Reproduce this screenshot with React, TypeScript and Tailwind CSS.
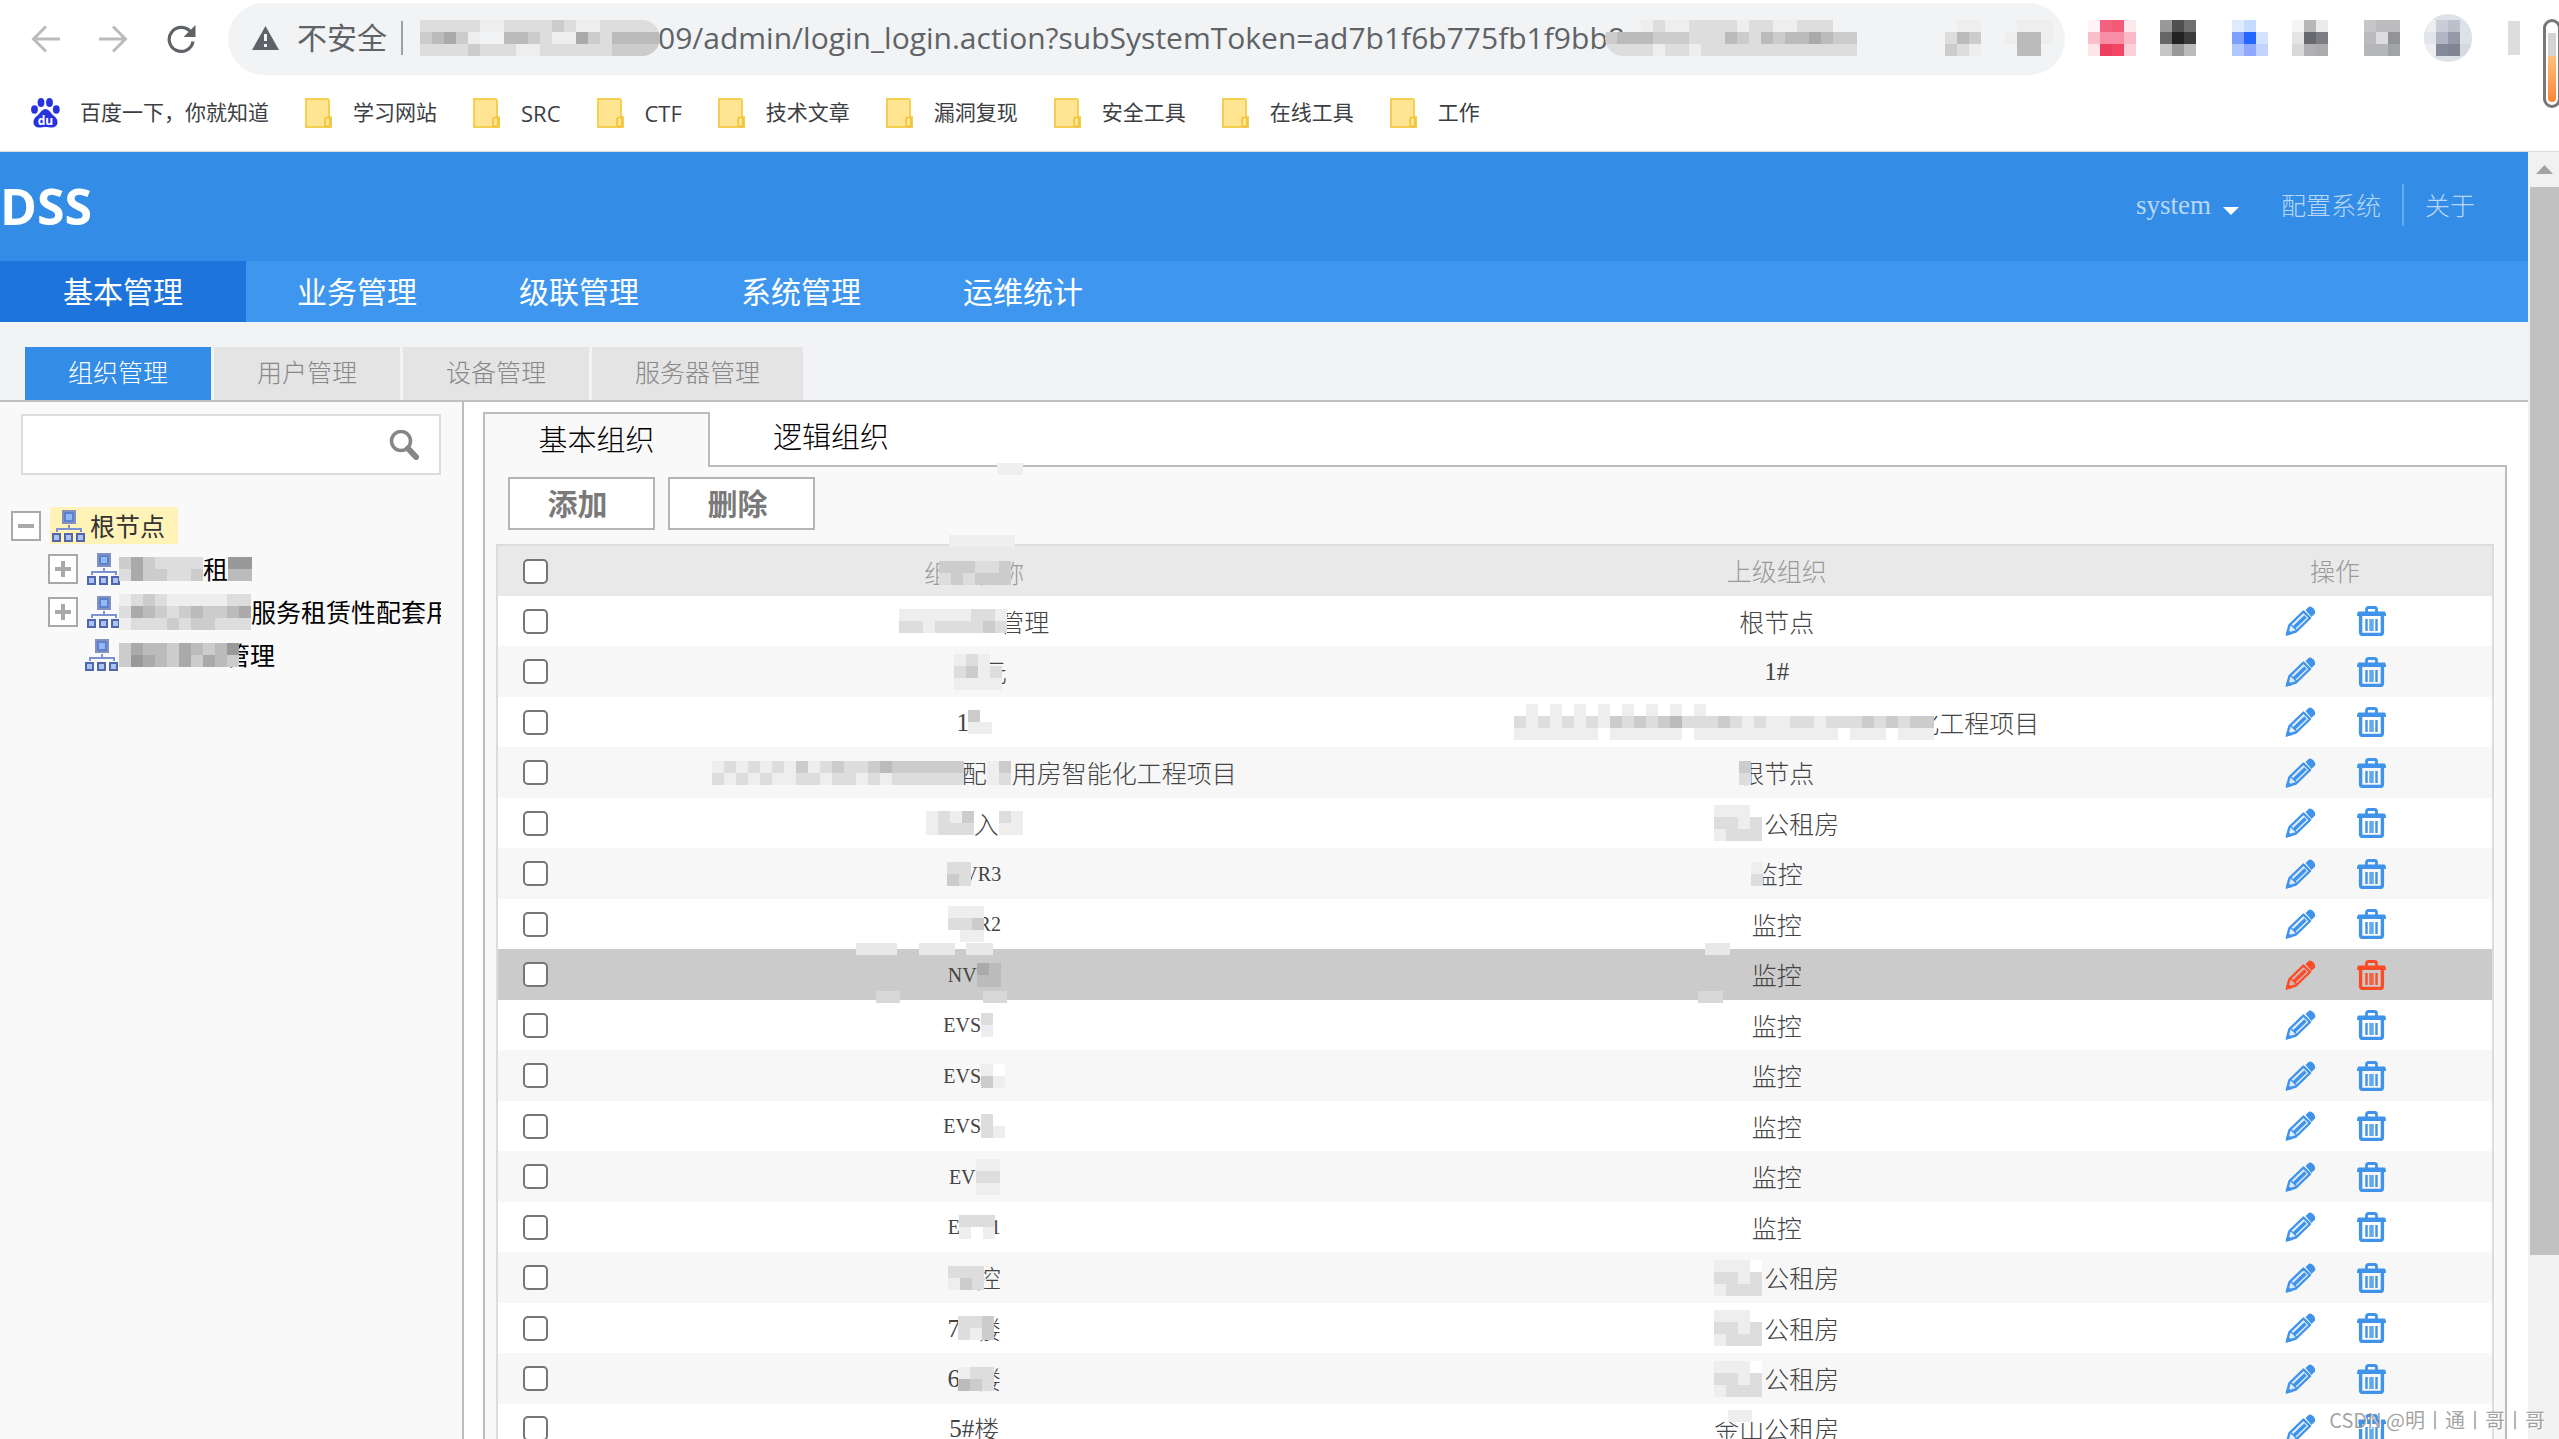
import { useState } from "react";
import type { ReactNode } from "react";

// one hex digit per 12px cell, "." leaves the cell open
function Mosaic({ rows, className = "" }: { rows: string[]; className?: string }) {
  const w = rows[0].length * 12;
  const h = rows.length * 12;
  return (
    <svg width={w} height={h} viewBox={`0 0 ${w} ${h}`} shapeRendering="crispEdges" className={`relative shrink-0 ${className}`} aria-hidden="true">
      {rows.map((row, y) =>
        row.split("").map((c, x) =>
          c === "." ? null : <rect key={`${x}-${y}`} x={x * 12} y={y * 12} width={12} height={12} fill={`#${c}${c}${c}`} />
        )
      )}
    </svg>
  );
}

// same thing with full colours, used for the toolbar extensions
function Pixels({ rows, className = "" }: { rows: string[][]; className?: string }) {
  const w = rows[0].length * 12;
  return (
    <svg width={w} height={36} viewBox={`0 0 ${w} 36`} shapeRendering="crispEdges" className={`shrink-0 ${className}`} aria-hidden="true">
      {rows.map((row, y) => row.map((c, x) => <rect key={`${x}-${y}`} x={x * 12} y={y * 12} width={12} height={12} fill={c} />))}
    </svg>
  );
}

function Latin({ children }: { children: ReactNode }) {
  return <span className="font-['Liberation_Serif',serif] text-[20px]">{children}</span>;
}

function Num({ children }: { children: ReactNode }) {
  return <span className="font-['Liberation_Serif',serif]">{children}</span>;
}

const bookmarks = ["学习网站", "SRC", "CTF", "技术文章", "漏洞复现", "安全工具", "在线工具", "工作"];
const mainMenu = ["基本管理", "业务管理", "级联管理", "系统管理", "运维统计"];
const subMenu = ["组织管理", "用户管理", "设备管理", "服务器管理"];

const house = (
  <>
    <Mosaic rows={["eeef.", "dded.", "eddd."]} className="-mr-[10px]" />
    公租房
  </>
);

const rows: { name: ReactNode; parent: ReactNode }[] = [
  { name: <><Mosaic rows={["eeeeeedde", "ddeddddcd"]} className="-mr-[8px]" />管理</>, parent: "根节点" },
  { name: <><Mosaic rows={[".ede.", ".dced", ".eeee"]} className="-mr-[20px]" />元</>, parent: <Num>1#</Num> },
  {
    name: <><Num>1</Num><Mosaic rows={["cf", "ee"]} className="-ml-[1px]" /></>,
    parent: <><Mosaic rows={["fefefefefefefefefffffffffffffffffff", "dedededecdcdcbdddcdedeeddedddcdcdcc", "eeeeeeefeeeeeefeeeeeeeeeeeefeeefeee"]} className="-mr-[20px]" />化工程项目</>,
  },
  {
    name: <><Mosaic rows={["edededecedcddcbcccccc", "dededeeddeddededddddd"]} className="-mr-[2px]" />配<Mosaic rows={["ec", "ed"]} className="mr-[1px]" />用房智能化工程项目</>,
    parent: <><Mosaic rows={["c", "d"]} className="-mr-[12px]" />根节点</>,
  },
  { name: <><Mosaic rows={["edec", "eddd"]} />入<Mosaic rows={["de", "ee"]} /></>, parent: house },
  { name: <><Mosaic rows={["dd", "cd"]} className="-mr-[8px]" /><Latin>VR3</Latin></>, parent: <><Mosaic rows={["e", "d"]} className="-mr-[10px]" />监控</> },
  { name: <><Mosaic rows={["eee", "ddc", "fee"]} className="-mr-[6px]" /><Latin>R2</Latin></>, parent: "监控" },
  { name: <><Latin>NV</Latin><Mosaic rows={["ab", "bb"]} /></>, parent: "监控" },
  { name: <><Latin>EVS</Latin><Mosaic rows={["df", "ef"]} /></>, parent: "监控" },
  { name: <><Latin>EVS</Latin><Mosaic rows={["ef", "ce"]} /></>, parent: "监控" },
  { name: <><Latin>EVS</Latin><Mosaic rows={["df", "de"]} /></>, parent: "监控" },
  { name: <><Latin>EV</Latin><Mosaic rows={["ee", "dd", "ee"]} /></>, parent: "监控" },
  { name: <><Latin>E</Latin><Mosaic rows={["ddd", "efe"]} className="-ml-[1px] -mr-[4px]" /><Latin>1</Latin></>, parent: "监控" },
  { name: <><Mosaic rows={["ddd", "ecd"]} className="-mr-[8px]" />控</>, parent: house },
  { name: <><Num>7</Num><Mosaic rows={["ddc", "dec"]} className="-ml-[2px] -mr-[18px]" />楼</>, parent: house },
  { name: <><Num>6</Num><Mosaic rows={["edd", "bcd"]} className="-ml-[2px] -mr-[18px]" />楼</>, parent: house },
  { name: <><Num>5#</Num>楼</>, parent: <>金山<Mosaic rows={["feef"]} className="-ml-[48px] self-start" />公租房</> },
];

function BackIcon({ flip = false }: { flip?: boolean }) {
  return (
    <svg width="30" height="28" viewBox="0 0 30 28" fill="none" stroke="#b9bbbd" strokeWidth="3" className={flip ? "rotate-180" : ""}>
      <path d="M29 14H3M15 1.5L2.500 14L15 26.500" />
    </svg>
  );
}

function ReloadIcon() {
  return (
    <svg width="30" height="30" viewBox="0 0 30 30" fill="none">
      <path d="M25 8.500A12 12 0 1 0 27 17.500" stroke="#5f6368" strokeWidth="3.200" />
      <path d="M29.500 1V13H17.500Z" fill="#5f6368" />
    </svg>
  );
}

function FolderIcon() {
  return (
    <svg width="27" height="30" viewBox="0 0 27 30">
      <path d="M1 1H22Q24 1 24 3V19H26V29H1Z" fill="#ffe591" stroke="#f5cf53" strokeWidth="2" />
      <rect x="20" y="19.500" width="5" height="9" rx="2" fill="#ffe591" stroke="#f0c02f" strokeWidth="1.500" />
    </svg>
  );
}

function BaiduIcon() {
  return (
    <svg width="29" height="30" viewBox="0 0 29 30" fill="#2932e1">
      <ellipse cx="10" cy="4.500" rx="3.400" ry="4.500" />
      <ellipse cx="18.500" cy="4.500" rx="3.400" ry="4.500" />
      <ellipse cx="3.500" cy="11.500" rx="3.400" ry="4.200" />
      <ellipse cx="25.300" cy="11.500" rx="3.400" ry="4.200" />
      <path d="M14.500 11C18 11 19.500 15 22.500 17.500C29 22 27 29.500 21 29.500C18 29.500 17 29 14.500 29C12 29 11 29.500 8 29.500C2 29.500 0 22 6.500 17.500C9.500 15 11 11 14.500 11Z" />
      <text x="14.500" y="26.500" fontSize="12" fontWeight="700" fontFamily="Open Sans, sans-serif" textAnchor="middle" fill="#fff">du</text>
    </svg>
  );
}

function OrgIcon() {
  return (
    <svg width="34" height="32" viewBox="0 0 34 32" className="shrink-0">
      <rect x="11" y="1" width="12" height="12" fill="#5f7fd0" stroke="#8391bd" strokeWidth="2" />
      <rect x="14" y="4" width="6" height="6" fill="#8fb8f5" />
      <path d="M17 15V19M5 22V19H29V22" fill="none" stroke="#7d93cf" strokeWidth="2" />
      <rect x="1" y="24" width="7" height="7" fill="#a9c3f2" stroke="#5166ad" strokeWidth="2" />
      <rect x="13" y="24" width="7" height="7" fill="#a9c3f2" stroke="#5166ad" strokeWidth="2" />
      <rect x="25" y="24" width="7" height="7" fill="#a9c3f2" stroke="#5166ad" strokeWidth="2" />
    </svg>
  );
}

function PencilIcon() {
  return (
    <svg width="31" height="30" viewBox="0 0 31 30" fill="none" stroke="currentColor">
      <path d="M2 28L4.500 19L18.500 5.500L25 12L11 25.500Z" strokeWidth="2.400" strokeLinejoin="round" fill="currentColor" fillOpacity="0.150" />
      <path d="M9 21.500L20.500 10.500" strokeWidth="3.400" />
      <path d="M5.500 18.500L12 24.500" strokeWidth="1.400" />
      <path d="M20.500 4L24 0.800Q26 0 28.800 2.800Q31 5.500 30 7.500L26.500 11Z" fill="currentColor" stroke="none" />
      <path d="M0.500 30L2.500 23L7.500 28Z" fill="currentColor" stroke="none" />
    </svg>
  );
}

function TrashIcon() {
  return (
    <svg width="29" height="30" viewBox="0 0 29 30" fill="none" stroke="currentColor">
      <path d="M9.500 6V3.500Q9.500 1.500 11.500 1.500H17.500Q19.500 1.500 19.500 3.500V6" strokeWidth="2.800" />
      <path d="M1.500 5.500H27.500Q29 6 29 10H0Q0 6 1.500 5.500Z" fill="currentColor" stroke="none" />
      <path d="M3.600 9V26Q3.600 28.400 5.500 28.400H23.500Q25.400 28.400 25.400 26V9" strokeWidth="3.400" />
      <path d="M9.500 13V25M19.500 13V25" strokeWidth="2.400" />
      <path d="M14.500 13V25" strokeWidth="4.500" opacity="0.800" />
    </svg>
  );
}

function Toggle({ open = false }: { open?: boolean }) {
  return (
    <button aria-label={open ? "收起" : "展开"} className="flex size-[30px] shrink-0 items-center justify-center border-2 border-[#a9a9a9] bg-white">
      <svg width="18" height="18" viewBox="0 0 18 18" stroke="#a9a9a9" strokeWidth="4">
        <path d={open ? "M1 9H17" : "M1 9H17M9 1V17"} />
      </svg>
    </button>
  );
}

function Toolbar() {
  return (
    <div className="border-b border-[#d9dce0] bg-white font-['Open_Sans','Noto_Sans_CJK_SC',sans-serif]">
      <div className="flex h-[78px] items-center pl-[31px]">
        <button aria-label="后退"><BackIcon /></button>
        <button aria-label="前进" className="ml-[37px]"><BackIcon flip /></button>
        <button aria-label="刷新" className="ml-[38px]"><ReloadIcon /></button>
        <div className="ml-[32px] flex h-[72px] min-w-0 flex-1 items-center rounded-full bg-[#f1f3f4] pb-[3px] pl-[24px] text-[#5f6368]">
          <svg width="27" height="24" viewBox="0 0 27 24">
            <path d="M13.500 0L27 24H0Z" fill="#5f6368" />
            <path d="M13.500 8V15M13.500 18V21" stroke="#f1f3f4" strokeWidth="3" />
          </svg>
          <span className="ml-[18px] text-[30px]">不安全</span>
          <span className="ml-[14px] h-[34px] w-[2px] bg-[#9aa0a6]" />
          <Mosaic rows={["dddddeeddddcdeeddddd", "cbace..bbcdeeacdbbbb", "ddddcdddeeddddddcccc"]} className="ml-[17px] rounded-r-full" />
          <label htmlFor="address" className="sr-only">地址</label>
          <input
            id="address"
            className="-ml-[2px] h-[44px] w-[990px] bg-transparent text-[30px] outline-none"
            defaultValue="09/admin/login_login.action?subSystemToken=ad7b1f6b775fb1f9bb8"
          />
          <Mosaic rows={["...edeeddddeddeeddd..", "cbbbcccdddbcdbcbbabcc", "ddddeddeddddddddddddd"]} className="-ml-[43px] rounded-l-full" />
          <div className="ml-auto flex gap-[24px] pr-[12px]">
            <Mosaic rows={[".ee", "dbc", "cde"]} />
            <Mosaic rows={[".eee", "ebbe", ".bb."]} />
          </div>
        </div>
        <div className="flex h-full items-center pb-[3px] pl-[23px]">
          <Pixels rows={[["#fff3f5", "#f4627f", "#f25a78", "#fde8ec"], ["#fbbecb", "#f78ea5", "#f78ea5", "#fbb8c6"], ["#fde5ea", "#ef3f61", "#f04565", "#fcd0d8"]]} />
          <Pixels className="ml-[24px]" rows={[["#999", "#505050", "#6f6f6f"], ["#666", "#222", "#3b3b3b"], ["#c6c6c6", "#999", "#bbb"]]} />
          <Pixels className="ml-[36px]" rows={[["#e0eaff", "#c5dcff", "#fff"], ["#7f9fff", "#2566ff", "#d3e2ff"], ["#b0c6ff", "#90a9ff", "#c3d2ff"]]} />
          <Pixels className="ml-[24px]" rows={[["#f4f6f5", "#b6b8ba", "#ebebeb"], ["#e4e4e4", "#67696e", "#7c7e84"], ["#d9d9dc", "#b0b0b3", "#abacae"]]} />
          <Pixels className="ml-[36px]" rows={[["#c6c6c8", "#bcbcbe", "#bcbcbe"], ["#bbbbbd", "#dddddf", "#929396"], ["#b5b6b8", "#b5b6b8", "#9fa4a6"]]} />
          <div className="ml-[24px] flex h-[48px] items-center overflow-hidden rounded-full bg-[#dde1e8]">
            <Pixels rows={[["#eceef2", "#cacdd8", "#bcc0cb", "#dde1e8"], ["#e2e5eb", "#b0b5c2", "#959aa8", "#dde1e8"], ["#eceef2", "#848a9a", "#7f8593", "#d5d9e2"]]} />
          </div>
          <span className="ml-[36px] h-[34px] w-[12px] bg-[#dcddde]" />
          <span className="ml-[23px] w-[16px]" />
        </div>
      </div>
      <nav className="flex h-[73px] items-center pb-[3px] pl-[31px] text-[21px] text-[#3c4043]">
        <a href="#baidu" className="flex items-center gap-[20px]"><BaiduIcon />百度一下，你就知道</a>
        {bookmarks.map((b) => (
          <a key={b} href="#bookmark" className={`ml-[36px] flex items-center gap-[21px] ${b.length === 3 ? "text-[22px]" : ""}`}>
            <FolderIcon />{b}
          </a>
        ))}
      </nav>
      {/* battery widget that hangs over the window edge */}
      <div className="absolute top-[19px] -right-[2px] h-[89px] w-[18px] rounded-full border-3 border-[#777] bg-white p-[2px]">
        <div className="mt-[9px] h-[23px] bg-[#d3d3d3]" />
        <div className="h-[46px] rounded-b-full bg-gradient-to-b from-[#fdc07c] to-[#fb8432]" />
      </div>
    </div>
  );
}

function Header() {
  return (
    <header className="bg-[#338ce6]">
      <div className="flex h-[109px] items-center">
        <h1 className="font-['Open_Sans',sans-serif] text-[50px] font-bold text-white">DSS</h1>
        <div className="mb-[3px] ml-auto flex h-[42px] items-center pr-[53px] text-[25px] font-light text-[#b9d8f8]">
          <button className="flex items-center gap-[12px]">
            <span className="font-['Liberation_Serif',serif] text-[27px] font-normal">system</span>
            <svg width="16" height="8" viewBox="0 0 16 8" className="mt-[12px]"><path d="M0 0H16L8 8Z" fill="#fff" /></svg>
          </button>
          <a href="#config" className="ml-[42px]">配置系统</a>
          <span className="mx-[21px] h-full w-[2px] bg-[#66a9ee]" />
          <a href="#about">关于</a>
        </div>
      </div>
      <nav className="flex h-[61px] bg-[#3e96ef] text-[30px] text-white">
        {mainMenu.map((m, i) => (
          <a key={m} href="#menu" className={i === 0 ? "flex w-[246px] items-center justify-center bg-[#1d74da] pb-[2px]" : "flex items-center px-[51px] pb-[2px]"}>
            {m}
          </a>
        ))}
      </nav>
    </header>
  );
}

function Sidebar() {
  return (
    <aside className="w-[464px] shrink-0 border-r-2 border-[#bcbcbc] bg-[#f9f9f9] pt-[12px]">
      <div className="mr-[21px] ml-[21px] flex h-[61px] items-center border-2 border-[#dcdcdc] bg-white pr-[20px]">
        <input aria-label="搜索" className="h-full min-w-0 flex-1 bg-transparent px-3 text-[25px] outline-none" />
        <button aria-label="查询">
          <svg width="30" height="30" viewBox="0 0 30 30" fill="none" stroke="#868686">
            <circle cx="12" cy="11" r="9.500" strokeWidth="3.500" />
            <path d="M19 18.500L27 27" strokeWidth="6" strokeLinecap="round" />
          </svg>
        </button>
      </div>
      <ul className="mr-[21px] overflow-hidden pt-[29px] text-[25px] leading-[43px] whitespace-nowrap text-black">
        <li className="flex h-[43px] items-center gap-[9px] pl-[11px]">
          <Toggle open />
          <span className="flex h-[37px] items-center gap-[4px] bg-[#fff3b8] pr-[13px] pl-[2px] text-[#333]"><OrgIcon />根节点</span>
        </li>
        <li className="flex h-[43px] items-center pl-[48px]">
          <Toggle />
          <span className="ml-[9px] flex items-center">
            <OrgIcon />
            <Mosaic rows={["cacdddd", "daccddc"]} className="-ml-[2px]" />租<Mosaic rows={["99", "bb"]} />
          </span>
        </li>
        <li className="flex h-[43px] items-center pl-[48px]">
          <Toggle />
          <span className="ml-[9px] flex items-center">
            <OrgIcon />
            <Mosaic rows={["edcdeeeeedd", "dabcdcbccba", "edddcdccddd"]} className="-ml-[2px]" />服务租赁性配套用
          </span>
        </li>
        <li className="flex h-[43px] items-center pl-[85px]">
          <OrgIcon />
          <Mosaic rows={["cabbcabcb9", "c9abcacabc"]} className="-mr-[14px]" />管理
        </li>
      </ul>
    </aside>
  );
}

function OrgTable() {
  return (
    <table className="w-full table-fixed border-2 border-[#dcdcdc] text-[25px] font-light">
      <thead>
        <tr className="h-[51px] bg-[#e9e9e9] text-[#999]">
          <th className="w-[76px]"><input type="checkbox" aria-label="全选" className="block mx-auto size-[25px] appearance-none rounded-[5px] border-2 border-[#767676] bg-white" /></th>
          <th className="font-light">
            <span className="relative inline-block align-middle">
              组织名称
              <Mosaic rows={["cccddc", "dcdccc"]} className="absolute! top-[7px] left-[15px]" />
            </span>
          </th>
          <th className="font-light">上级组织</th>
          <th className="w-[315px] font-light">操作</th>
        </tr>
      </thead>
      <tbody className="text-[#444]">
        {rows.map((row, i) => (
          <tr
            key={i}
            className={i === 7 ? "h-[51px] bg-[#cbcbcb] text-[#fb4b27]" : "bg-white text-[#3f93ea] odd:h-[50px] even:h-[51px] even:bg-[#f7f7f7]"}
          >
            <td><input type="checkbox" aria-label={`选择第${i + 1}行`} className="block mx-auto size-[25px] appearance-none rounded-[5px] border-2 border-[#767676] bg-white" /></td>
            <td className="pb-[3px] text-center text-[#444]"><span className="inline-flex h-[37px] items-center align-middle">{row.name}</span></td>
            <td className="pb-[3px] text-center text-[#444]"><span className="inline-flex h-[37px] items-center align-middle">{row.parent}</span></td>
            <td>
              <div className="flex items-center justify-center gap-[41px]">
                <button aria-label="编辑"><PencilIcon /></button>
                <button aria-label="删除"><TrashIcon /></button>
              </div>
            </td>
          </tr>
        ))}
      </tbody>
    </table>
  );
}

// leftovers of the eraser around the name column
function Smudges() {
  return (
    <>
      <span className="absolute top-[61px] left-[533px] h-[12px] w-[26px] bg-[#efefef]" />
      <span className="absolute top-[133px] left-[485px] h-[12px] w-[66px] bg-[#efefef]" />
      <span className="absolute top-[541px] left-[392px] h-[12px] w-[41px] bg-[#e8e8e8]" />
      <span className="absolute top-[541px] left-[455px] h-[12px] w-[36px] bg-[#e8e8e8]" />
      <span className="absolute top-[541px] left-[502px] h-[12px] w-[27px] bg-[#e8e8e8]" />
      <span className="absolute top-[589px] left-[412px] h-[12px] w-[24px] bg-[#d8d8d8]" />
      <span className="absolute top-[589px] left-[519px] h-[12px] w-[24px] bg-[#d8d8d8]" />
      <span className="absolute top-[541px] left-[1241px] h-[12px] w-[25px] bg-[#e8e8e8]" />
      <span className="absolute top-[589px] left-[1234px] h-[12px] w-[25px] bg-[#d8d8d8]" />
    </>
  );
}

export default function App() {
  const [tab, setTab] = useState(0);

  return (
    <div className="relative flex h-screen flex-col overflow-hidden bg-white font-['Noto_Sans_CJK_SC',sans-serif]">
      <Toolbar />
      <div className="flex min-h-0 flex-1">
        <div className="flex min-w-0 flex-1 flex-col">
          <Header />
          <div className="flex h-[80px] shrink-0 items-end gap-[3px] border-b-2 border-[#c0c0c0] bg-[#f1f3f5] pl-[25px]">
            {subMenu.map((s, i) => (
              <button
                key={s}
                onClick={() => setTab(i)}
                className={`h-[53px] px-[43px] pb-[3px] text-[25px] font-light ${tab === i ? "bg-[#338ce6] text-white" : "bg-[#e4e4e4] text-[#888]"}`}
              >
                {s}
              </button>
            ))}
          </div>
          <div className="flex min-h-0 flex-1">
            <Sidebar />
            <main className="relative min-w-0 flex-1 pt-[10px] pr-[21px] pl-[19px]">
              <div className="flex text-[29px] font-light text-black">
                <button className="z-10 -mb-[2px] h-[55px] w-[227px] border-2 border-b-0 border-[#bcbcbc] bg-[#f9f9f9] pb-[3px]">基本组织</button>
                <button className="h-[53px] px-[63px] pb-[5px]">逻辑组织</button>
              </div>
              <div className="border-2 border-b-0 border-[#bcbcbc] bg-[#f9f9f9] px-[11px] pt-[10px]">
                <div className="mb-[14px] flex gap-[13px] pl-[12px] text-[30px] font-bold text-[#7a7a7a]">
                  <button className="h-[53px] w-[147px] border-2 border-[#b5b5b5] bg-white pr-[8px] pb-[3px]">添加</button>
                  <button className="h-[53px] w-[147px] border-2 border-[#b5b5b5] bg-white pr-[8px] pb-[3px]">删除</button>
                </div>
                <OrgTable />
              </div>
              <Smudges />
            </main>
          </div>
        </div>
        {/* page scrollbar */}
        <div className="flex w-[31px] shrink-0 flex-col bg-[#f1f1f1] pl-[2px]">
          <div className="flex h-[35px] items-center justify-center">
            <svg width="17" height="9" viewBox="0 0 17 9"><path d="M0 9L8.500 0L17 9Z" fill="#a3a3a3" /></svg>
          </div>
          <div className="h-[83%] bg-[#c1c1c1]" />
        </div>
      </div>
      <div className="absolute right-[14px] bottom-[4px] text-[20px] text-[#8c8c8c]/80 text-shadow-[1px_1px_0_white]">
        CSDN @明丨通丨哥丨哥
      </div>
    </div>
  );
}
